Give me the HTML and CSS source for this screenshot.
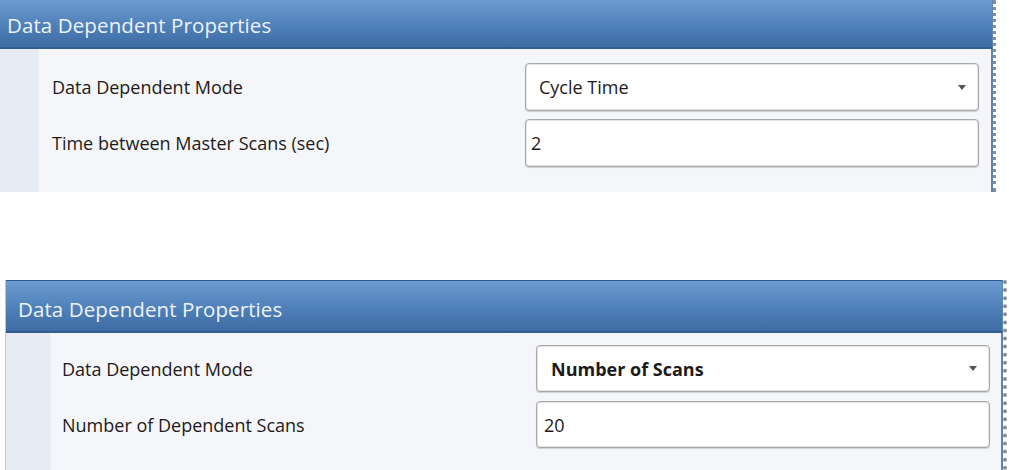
FILE: index.html
```html
<!DOCTYPE html>
<html>
<head>
<meta charset="utf-8">
<link rel="stylesheet" href="styles.css">
</head>
<body>
<div class="shot shot-a">
  <div class="panel">
    <div class="header">Data Dependent Properties</div>
    <div class="body">
      <div class="strip"></div>
      <div class="rows">
        <div class="row">
          <div class="label">Data Dependent Mode</div>
          <div class="field select"><span>Cycle Time</span><span class="arrow"></span></div>
        </div>
        <div class="row">
          <div class="label">Time between Master Scans (sec)</div>
          <div class="field"><span>2</span></div>
        </div>
      </div>
    </div>
  </div>
</div>
<div class="shot shot-b">
  <div class="panel">
    <div class="header">Data Dependent Properties</div>
    <div class="body">
      <div class="strip"></div>
      <div class="rows">
        <div class="row">
          <div class="label">Data Dependent Mode</div>
          <div class="field select"><span class="bold">Number of Scans</span><span class="arrow"></span></div>
        </div>
        <div class="row">
          <div class="label">Number of Dependent Scans</div>
          <div class="field"><span>20</span></div>
        </div>
      </div>
    </div>
  </div>
</div>
</body>
</html>
```
FILE: styles.css
```css
html, body {
  margin: 0;
  padding: 0;
  background: #ffffff;
  font-family: "Open Sans", "Noto Sans", sans-serif;
  overflow: hidden;
}
.shot {
  display: flex;
}
.shot-a {
  width: 993px;
  height: 192px;
  border-right: 3px dotted #8c8c8c;
}
.shot-b {
  margin-top: 88px;
  margin-left: 5px;
  width: 997px;
  height: 190px;
  border-left: 1px solid #b9c6d6;
  border-right: 4px dotted #8c8c8c;
}
.panel {
  flex: 1;
  display: flex;
  flex-direction: column;
}
.header {
  color: #eef3f9;
  font-size: 20.5px;
  display: flex;
  align-items: center;
  background: linear-gradient(#6b9bd0, #4f80b8 55%, #3e6ca3);
  border-bottom: 2px solid #2f5d94;
  border-right: 1px solid #5d86b8;
  letter-spacing: 0.1px;
}
.shot-a .header {
  box-sizing: border-box;
  height: 49px;
  padding: 3px 0 0 7px;
}
.shot-b .header {
  box-sizing: border-box;
  height: 53px;
  padding: 5px 0 0 12px;
  border-top: 1px solid #2e5b92;
}
.body {
  flex: 1;
  display: flex;
  background: #f4f6f9;
  border-right: 2px solid #5b85b9;
}
.strip {
  background: #e7ebf3;
  border-right: 1px solid #edf0f6;
}
.shot-a .strip { width: 38px; }
.shot-b .strip { width: 44px; }
.rows {
  flex: 1;
  display: flex;
  flex-direction: column;
}
.shot-a .rows {
  padding: 14px 12px 0 13px;
  gap: 8px;
}
.shot-b .rows {
  padding: 12px 11px 0 11px;
  gap: 9px;
}
.row {
  display: flex;
  align-items: center;
  justify-content: space-between;
}
.label {
  font-size: 18px;
  color: #1e1a1a;
}
.field {
  box-sizing: border-box;
  height: 48px;
  background: #ffffff;
  border: 1px solid #a9a9a9;
  border-radius: 4px;
  box-shadow: inset 0 0 0 1px #e4e4e4, 0 1px 1px rgba(0,0,0,0.15);
  display: flex;
  align-items: center;
  justify-content: space-between;
  font-size: 18px;
  color: #1e1a1a;
}
.shot-a .field {
  width: 454px;
  padding: 0 12px 0 5px;
}
.shot-a .select { padding-left: 13px; }
.shot-b .field {
  width: 454px;
  height: 47px;
  padding: 0 12px 0 7px;
}
.shot-b .select { padding-left: 14px; }
.bold { font-weight: 700; }
.arrow {
  width: 0;
  height: 0;
  border-left: 4px solid transparent;
  border-right: 4px solid transparent;
  border-top: 5px solid #555555;
}
```
